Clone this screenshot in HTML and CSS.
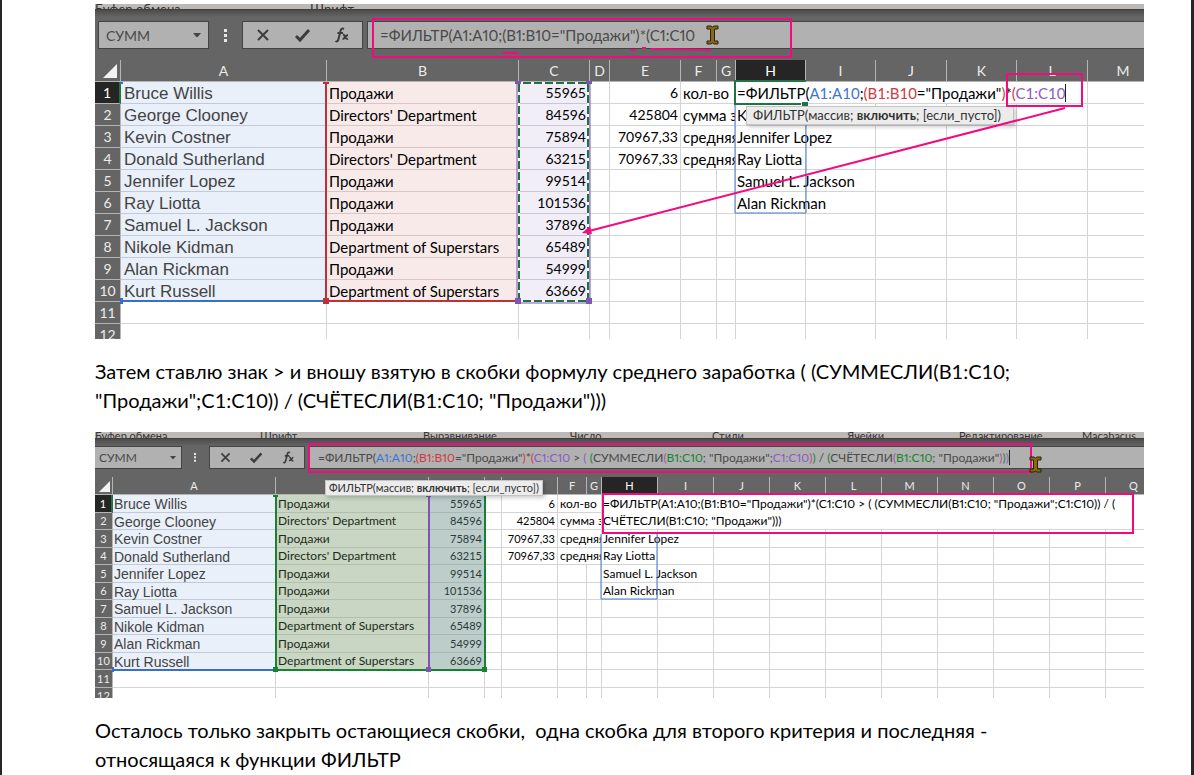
FILE: index.html
```html
<!DOCTYPE html>
<html lang="ru">
<head>
<meta charset="utf-8">
<title>Функция ФИЛЬТР</title>
<link rel="stylesheet" href="styles.css">
</head>
<body>
<main class="page">

<figure class="sheet sheet-large">
  <div class="ribbon"><span>Буфер обмена</span><span>Шрифт</span><span></span><span></span></div>
  <div class="toolbar">
    <div class="namebox">
      <select aria-label="Имя"><option>СУММ</option></select>
      <svg class="caret" viewBox="0 0 10 6" aria-hidden="true"><path d="M0 0h10L5 6z"/></svg>
    </div>
    <svg class="dots" viewBox="0 0 3 13" aria-hidden="true"><path d="M0 0h3v3H0zM0 5h3v3H0zM0 10h3v3H0z"/></svg>
    <div class="actions">
      <button type="button" aria-label="Отмена"><svg viewBox="0 0 16 16"><path class="stroke" d="M3 3L13 13M13 3L3 13"/></svg></button>
      <button type="button" aria-label="Ввод"><svg viewBox="0 0 16 16"><path class="stroke thick" d="M1 9L5 13L14 3"/></svg></button>
      <button type="button" aria-label="Вставить функцию"><svg viewBox="0 0 16 16"><path class="stroke" d="M10 2C8 1 7 2 6.500 4L4.500 12C4 14 3 15 1.500 14M3.500 6H9M9 8C11 7 11 13 14 12M14 8C12 8 11 12 8.500 12"/></svg></button>
    </div>
    <input class="formula" aria-label="Строка формул" value='=ФИЛЬТР(A1:A10;(B1:B10="Продажи")*(C1:C10'>
  </div>
  <table class="grid">
    <colgroup><col class="c-row"><col class="c-a"><col class="c-b"><col class="c-c"><col class="c-d"><col class="c-e"><col class="c-f"><col class="c-g"><col class="c-h"><col class="c-w"><col class="c-x"><col class="c-w"><col class="c-x"><col class="c-x"></colgroup>
    <thead><tr><th class="corner"><svg viewBox="0 0 14 14" aria-hidden="true"><path d="M14 0V14H0z"/></svg></th><th>A</th><th>B</th><th>C</th><th>D</th><th>E</th><th>F</th><th>G</th><th class="on">H</th><th>I</th><th>J</th><th>K</th><th>L</th><th>M</th></tr></thead>
    <tbody>
    <tr><th class="on">1</th><td class="a">Bruce Willis</td><td class="b">Продажи</td><td class="c">55965</td><td></td><td class="n">6</td><td class="t" colspan="2">кол-во</td><td class="edit" colspan="5">=ФИЛЬТР(<span class="blue">A1:A10</span>;<span class="red">(B1:B10</span>="Продажи"<span class="red">)</span>*<span class="red">(</span><span class="violet">C1:C10</span><span class="bar"></span></td><td></td></tr>
    <tr><th>2</th><td class="a">George Clooney</td><td class="b">Directors' Department</td><td class="c">84596</td><td></td><td class="n">425804</td><td class="t" colspan="2">сумма з</td><td class="h">K</td><td></td><td></td><td></td><td></td><td></td></tr>
    <tr><th>3</th><td class="a">Kevin Costner</td><td class="b">Продажи</td><td class="c">75894</td><td></td><td class="n">70967,33</td><td class="t" colspan="2">средняя з</td><td class="h">Jennifer Lopez</td><td></td><td></td><td></td><td></td><td></td></tr>
    <tr><th>4</th><td class="a">Donald Sutherland</td><td class="b">Directors' Department</td><td class="c">63215</td><td></td><td class="n">70967,33</td><td class="t" colspan="2">средняя з</td><td class="h">Ray Liotta</td><td></td><td></td><td></td><td></td><td></td></tr>
    <tr><th>5</th><td class="a">Jennifer Lopez</td><td class="b">Продажи</td><td class="c">99514</td><td></td><td></td><td></td><td></td><td class="h">Samuel L. Jackson</td><td></td><td></td><td></td><td></td><td></td></tr>
    <tr><th>6</th><td class="a">Ray Liotta</td><td class="b">Продажи</td><td class="c">101536</td><td></td><td></td><td></td><td></td><td class="h">Alan Rickman</td><td></td><td></td><td></td><td></td><td></td></tr>
    <tr><th>7</th><td class="a">Samuel L. Jackson</td><td class="b">Продажи</td><td class="c">37896</td><td></td><td></td><td></td><td></td><td></td><td></td><td></td><td></td><td></td><td></td></tr>
    <tr><th>8</th><td class="a">Nikole Kidman</td><td class="b">Department of Superstars</td><td class="c">65489</td><td></td><td></td><td></td><td></td><td></td><td></td><td></td><td></td><td></td><td></td></tr>
    <tr><th>9</th><td class="a">Alan Rickman</td><td class="b">Продажи</td><td class="c">54999</td><td></td><td></td><td></td><td></td><td></td><td></td><td></td><td></td><td></td><td></td></tr>
    <tr><th>10</th><td class="a">Kurt Russell</td><td class="b">Department of Superstars</td><td class="c">63669</td><td></td><td></td><td></td><td></td><td></td><td></td><td></td><td></td><td></td><td></td></tr>
    <tr><th>11</th><td></td><td></td><td></td><td></td><td></td><td></td><td></td><td></td><td></td><td></td><td></td><td></td><td></td></tr>
    <tr><th>12</th><td></td><td></td><td></td><td></td><td></td><td></td><td></td><td></td><td></td><td></td><td></td><td></td><td></td></tr>
    </tbody>
  </table>
  <svg class="marks" width="1049" height="335" aria-hidden="true">
    <path class="m-blue" d="M25 297H230"/><path class="f-blue" d="M25 294h3v6h-3zM25 78h3v2h-3z"/>
    <path class="m-red" d="M231 79V297H423"/><path class="f-red" d="M228 294h6v6h-6zM228 78h6v2h-6z"/>
    <path class="m-white" d="M424 80V297M493 80V297M424 297H494M424 79H493"/>
    <path class="m-violet thin" d="M422 79V297M495 79V297M424 299H495"/>
    <path class="m-ants" d="M424 80V296M493 80V296M428 297H491M428 79H491"/>
    <path class="f-violet" d="M420 294h6v6h-6zM491 294h6v6h-6zM420 77h6v3h-6zM491 77h6v3h-6z"/>
    <path class="m-spill" d="M640 100V209H711V100"/>
    <path class="m-active" d="M711 77H640V100H706M708 99h4v2h-4z"/>
  </svg>
  <div class="tip">ФИЛЬТР(массив; <b>включить</b>; [если_пусто])</div>
  <svg class="marks" width="1049" height="335" aria-hidden="true">
    <rect class="pink" x="278" y="15" width="418" height="38"/>
    <rect class="pink" x="912" y="70" width="75" height="32"/>
    <path class="pink" d="M970 104L494 227M408 49h16M535 46h6M547 44h4M556 45L616 46"/>
    <path class="f-pink" d="M487 229L495 222L497 230z"/>
    <path class="beam" d="M612 22h4l1.500 1l1.500 -1h4v3h-3.500v12h3.500v3h-4l-1.500 -1l-1.500 1h-4v-3h3.500v-12h-3.500z"/>
  </svg>
</figure>

<p>Затем ставлю знак &gt; и вношу взятую в скобки формулу среднего заработка ( (СУММЕСЛИ(B1:C10; "Продажи";C1:C10)) / (СЧЁТЕСЛИ(B1:C10; "Продажи")))</p>

<figure class="sheet sheet-small">
  <div class="ribbon"><span>Буфер обмена</span><span>Шрифт</span><span>Выравнивание</span><span>Число</span><span>Стили</span><span>Ячейки</span><span>Редактирование</span><span>Macabacus</span></div>
  <div class="toolbar">
    <div class="namebox">
      <select aria-label="Имя"><option>СУММ</option></select>
      <svg class="caret" viewBox="0 0 10 6" aria-hidden="true"><path d="M0 0h10L5 6z"/></svg>
    </div>
    <svg class="dots" viewBox="0 0 3 13" aria-hidden="true"><path d="M0 0h3v3H0zM0 5h3v3H0zM0 10h3v3H0z"/></svg>
    <div class="actions">
      <button type="button" aria-label="Отмена"><svg viewBox="0 0 16 16"><path class="stroke" d="M3 3L13 13M13 3L3 13"/></svg></button>
      <button type="button" aria-label="Ввод"><svg viewBox="0 0 16 16"><path class="stroke thick" d="M1 9L5 13L14 3"/></svg></button>
      <button type="button" aria-label="Вставить функцию"><svg viewBox="0 0 16 16"><path class="stroke" d="M10 2C8 1 7 2 6.500 4L4.500 12C4 14 3 15 1.500 14M3.500 6H9M9 8C11 7 11 13 14 12M14 8C12 8 11 12 8.500 12"/></svg></button>
    </div>
    <div class="formula" role="textbox" contenteditable="true" aria-label="Строка формул">=ФИЛЬТР(<span class="blue">A1:A10</span>;<span class="red">(B1:B10</span>="Продажи"<span class="red">)</span>*<span class="red">(</span><span class="violet">C1:C10</span> &gt; <span class="violet">(</span> <span class="green">(</span>СУММЕСЛИ<span class="plum">(</span><span class="green">B1:C10</span>; "Продажи";<span class="violet">C1:C10</span><span class="plum">)</span><span class="green">)</span> / <span class="green">(</span>СЧЁТЕСЛИ<span class="plum">(</span><span class="green">B1:C10</span>; "Продажи"<span class="plum">)</span><span class="green">)</span><span class="violet">)</span><span class="bar"></span></div>
  </div>
  <table class="grid">
    <colgroup><col class="c-row"><col class="c-a"><col class="c-b"><col class="c-c"><col class="c-d"><col class="c-e"><col class="c-f"><col class="c-g"><col class="c-h"><col class="c-x"><col class="c-x"><col class="c-x"><col class="c-x"><col class="c-x"><col class="c-x"><col class="c-x"><col class="c-x"><col class="c-x"></colgroup>
    <thead><tr><th class="corner"><svg viewBox="0 0 14 14" aria-hidden="true"><path d="M14 0V14H0z"/></svg></th><th>A</th><th>B</th><th>C</th><th>D</th><th>E</th><th>F</th><th>G</th><th class="on">H</th><th>I</th><th>J</th><th>K</th><th>L</th><th>M</th><th>N</th><th>O</th><th>P</th><th>Q</th></tr></thead>
    <tbody>
    <tr><th class="on">1</th><td class="a">Bruce Willis</td><td class="b">Продажи</td><td class="c">55965</td><td></td><td class="n">6</td><td class="t" colspan="2">кол-во</td><td class="edit" colspan="10" rowspan="2">=ФИЛЬТР(A1:A10;(B1:B10="Продажи")*(C1:C10 &gt; ( (СУММЕСЛИ(B1:C10; "Продажи";C1:C10)) / (<br>СЧЁТЕСЛИ(B1:C10; "Продажи")))</td></tr>
    <tr><th>2</th><td class="a">George Clooney</td><td class="b">Directors' Department</td><td class="c">84596</td><td></td><td class="n">425804</td><td class="t" colspan="2">сумма з</td></tr>
    <tr><th>3</th><td class="a">Kevin Costner</td><td class="b">Продажи</td><td class="c">75894</td><td></td><td class="n">70967,33</td><td class="t" colspan="2">средняя з</td><td class="h">Jennifer Lopez</td><td></td><td></td><td></td><td></td><td></td><td></td><td></td><td></td><td></td></tr>
    <tr><th>4</th><td class="a">Donald Sutherland</td><td class="b">Directors' Department</td><td class="c">63215</td><td></td><td class="n">70967,33</td><td class="t" colspan="2">средняя з</td><td class="h">Ray Liotta</td><td></td><td></td><td></td><td></td><td></td><td></td><td></td><td></td><td></td></tr>
    <tr><th>5</th><td class="a">Jennifer Lopez</td><td class="b">Продажи</td><td class="c">99514</td><td></td><td></td><td></td><td></td><td class="h">Samuel L. Jackson</td><td></td><td></td><td></td><td></td><td></td><td></td><td></td><td></td><td></td></tr>
    <tr><th>6</th><td class="a">Ray Liotta</td><td class="b">Продажи</td><td class="c">101536</td><td></td><td></td><td></td><td></td><td class="h">Alan Rickman</td><td></td><td></td><td></td><td></td><td></td><td></td><td></td><td></td><td></td></tr>
    <tr><th>7</th><td class="a">Samuel L. Jackson</td><td class="b">Продажи</td><td class="c">37896</td><td></td><td></td><td></td><td></td><td></td><td></td><td></td><td></td><td></td><td></td><td></td><td></td><td></td><td></td></tr>
    <tr><th>8</th><td class="a">Nikole Kidman</td><td class="b">Department of Superstars</td><td class="c">65489</td><td></td><td></td><td></td><td></td><td></td><td></td><td></td><td></td><td></td><td></td><td></td><td></td><td></td><td></td></tr>
    <tr><th>9</th><td class="a">Alan Rickman</td><td class="b">Продажи</td><td class="c">54999</td><td></td><td></td><td></td><td></td><td></td><td></td><td></td><td></td><td></td><td></td><td></td><td></td><td></td><td></td></tr>
    <tr><th>10</th><td class="a">Kurt Russell</td><td class="b">Department of Superstars</td><td class="c">63669</td><td></td><td></td><td></td><td></td><td></td><td></td><td></td><td></td><td></td><td></td><td></td><td></td><td></td><td></td></tr>
    <tr><th>11</th><td></td><td></td><td></td><td></td><td></td><td></td><td></td><td></td><td></td><td></td><td></td><td></td><td></td><td></td><td></td><td></td><td></td></tr>
    <tr><th>12</th><td></td><td></td><td></td><td></td><td></td><td></td><td></td><td></td><td></td><td></td><td></td><td></td><td></td><td></td><td></td><td></td><td></td></tr>
    </tbody>
  </table>
  <svg class="marks" width="1049" height="266" aria-hidden="true">
    <path class="m-blue" d="M17 238H180"/><path class="f-blue" d="M17 235h2v5h-2z"/>
    <path class="m-green" d="M181 64V238H390V64"/>
    <path class="m-violet" d="M334 64V236"/>
    <path class="f-green" d="M178 235h5v5h-5zM387 235h5v5h-5zM178 63h5v2h-5z"/><path class="f-violet" d="M331 235h5v5h-5zM331 63h5v2h-5z"/>
    <path class="m-spill" d="M506 102V167H562V102"/>
  </svg>
  <div class="tip">ФИЛЬТР(массив; <b>включить</b>; [если_пусто])</div>
  <svg class="marks" width="1049" height="266" aria-hidden="true">
    <rect class="pink" x="214" y="12" width="722" height="28"/>
    <rect class="pink" x="508" y="62" width="530" height="39"/>
    <path class="beam" d="M935 25h4l1.500 1l1.500 -1h4v3h-3.500v9h3.500v3h-4l-1.500 -1l-1.500 1h-4v-3h3.500v-9h-3.500z"/>
  </svg>
</figure>

<p>Осталось только закрыть остающиеся скобки,&nbsp; одна скобка для второго критерия и последняя - относящаяся к функции ФИЛЬТР</p>
</main>
</body>
</html>
```

FILE: styles.css
```css
* { box-sizing: border-box; }

body {
  margin: 0;
  background: #fff;
  color: #000;
  font-family: Lato, "Open Sans", sans-serif;
  overflow: hidden;
}

.page {
  min-height: 100vh;
  padding: 4px 47px 0 93px;
  border-left: 2px solid #26262a;
  border-right: 3px solid #26262a;
}

.page p {
  margin: 18px 0 17px;
  padding-right: 48px;
  font-size: 20px;
  line-height: 29px;
}

.sheet {
  position: relative;
  margin: 0;
  overflow: hidden;
  background: #fff;
}

.sheet-large { height: 335px; font-size: 15px; }
.sheet-small { height: 266px; font-size: 12px; }

/* Ribbon edge */
.ribbon {
  display: grid;
  align-items: end;
  overflow: hidden;
  background: #bdb9b6;
  border-bottom: 1px solid #3f3f3f;
  color: #333;
  white-space: nowrap;
}
.ribbon span { height: 16px; }
.sheet-large .ribbon { height: 6px; line-height: 10px; font-size: 13px; grid-template-columns: 215px 200px 1fr 1fr; }
.sheet-small .ribbon { height: 7px; line-height: 8px; font-size: 11px; grid-template-columns: 165px 163px 147px 142px 135px 112px 123px 1fr; }

/* Name box, buttons and formula bar */
.toolbar {
  display: flex;
  background: linear-gradient(#4c4c4c, #656565 7px);
}
.sheet-large .toolbar { padding: 11px 0 11px 3px; }
.sheet-small .toolbar { padding: 7px 0 8px; }

.namebox, .actions, .formula {
  background: #b1b1b1;
  border: 1px solid #444;
}
.sheet-large .namebox, .sheet-large .actions, .sheet-large .formula { height: 28px; }
.sheet-small .namebox, .sheet-small .actions, .sheet-small .formula { height: 23px; }

.namebox { display: flex; align-items: center; }
.sheet-large .namebox { width: 111px; padding: 0 7px; }
.sheet-small .namebox { width: 87px; padding: 0 5px 0 4px; border-left: 0; }
.namebox select {
  flex: 1;
  min-width: 0;
  padding: 0;
  border: 0;
  background: none;
  appearance: none;
  color: #4a4a4a;
  font: inherit;
}
.sheet-large .namebox select { font-size: 14px; }
.caret { width: 8px; fill: #444; }
.sheet-small .caret { width: 6px; }

.dots { align-self: center; fill: #e6e6e6; }
.sheet-large .dots { width: 3px; margin: 0 15px; }
.sheet-small .dots { width: 2px; margin: 0 13px 0 12px; }

.actions { display: flex; }
.sheet-large .actions { width: 121px; margin-right: 4px; }
.sheet-small .actions { width: 96px; margin-right: 4px; }
.actions button {
  flex: 1;
  display: flex;
  align-items: center;
  justify-content: center;
  padding: 0;
  border: 0;
  background: none;
}
.actions svg { width: 16px; height: 16px; }
.sheet-small .actions svg { width: 13px; height: 13px; }
.stroke { fill: none; stroke: #3c3c3c; stroke-width: 2; }
.thick { stroke-width: 3; }

.formula {
  flex: 1;
  min-width: 0;
  border-right: 0;
  color: #4a4a4a;
  font: inherit;
  white-space: nowrap;
  outline: 0;
}
.sheet-large .formula { padding: 0 12px; }
.sheet-small .formula { padding: 0 8px; line-height: 21px; }
.formula, .sheet-small .edit { font-variant-numeric: proportional-nums; }

.blue { color: #3d75d0; }
.red { color: #d03a40; }
.violet { color: #8a5cc4; }
.green { color: #16862c; }
.plum { color: #b34f9c; }
.bar { border-right: 1px solid #222; }

/* Cells */
.grid {
  table-layout: fixed;
  width: 1px;
  border-spacing: 0;
  line-height: 16px;
}
.grid th, .grid td {
  padding: 0;
  border-right: 1px solid #d4d4d4;
  border-bottom: 1px solid #d4d4d4;
  white-space: nowrap;
}
.grid th { background: #656565; color: #ececec; font-weight: 400; text-align: center; border-color: #b5b5b5; }
.sheet-large th { font-size: 14px; }
.sheet-small th { font-size: 11px; }
.grid .on { background: #252525; color: #fff; }
.grid tbody .on { border-right: 2px solid #217346; }
.grid .corner { text-align: right; vertical-align: bottom; line-height: 0; }
.corner svg { width: 14px; margin: 0 3px 3px 0; fill: #f2f2f2; }
.sheet-small .corner svg { width: 11px; margin: 0 2px 2px 0; }

.sheet-large tr { height: 22px; }
.sheet-small tr { height: 18px; }
.sheet-small tbody tr:nth-child(even) { height: 17px; }
.sheet-small .grid { line-height: 14px; }

.grid .a { background: #e9f0fa; border-color: #c3c9d6; color: #434343; font-family: "Liberation Sans", Arial, sans-serif; }
.sheet-large .a { padding: 2px 0 0 3px; font-size: 17px; }
.sheet-small .a { padding: 1px 0 0 1px; font-size: 14px; }
.grid .b { padding-left: 2px; background: #f9eaea; border-color: #d6c6c8; }
.grid .c { padding-right: 3px; background: #f1eef8; border-color: #c8c5d2; text-align: right; }
.sheet-small .b { background: #c9d6c3; border-color: #b3bfae; color: #1b2b18; }
.sheet-small .c { padding-right: 2px; background: #bccdca; border-color: #a7b7b5; color: #2b3b3b; }
.grid .n { padding-right: 2px; text-align: right; }
.sheet-large .c, .sheet-large .n { font-size: 14px; }
.sheet-small .c, .sheet-small .n { font-size: 11px; }
.grid .t { padding-left: 2px; overflow: hidden; }
.grid .h, .grid .edit { padding-left: 1px; }
.sheet-small .edit { line-height: 17px; }

.sheet-large .c-row { width: 26px; }
.sheet-large .c-a { width: 206px; }
.sheet-large .c-b { width: 192px; }
.sheet-large .c-c { width: 71px; }
.sheet-large .c-d { width: 20px; }
.sheet-large .c-e { width: 71px; }
.sheet-large .c-f { width: 36px; }
.sheet-large .c-g { width: 19px; }
.sheet-large .c-h { width: 70px; }
.sheet-large .c-w { width: 70px; }
.sheet-large .c-x { width: 71px; }

.sheet-small .c-row { width: 18px; }
.sheet-small .c-a { width: 163px; }
.sheet-small .c-b { width: 153px; }
.sheet-small .c-c { width: 56px; }
.sheet-small .c-d { width: 17px; }
.sheet-small .c-e { width: 56px; }
.sheet-small .c-f { width: 29px; }
.sheet-small .c-g { width: 15px; }
.sheet-small .c-h { width: 56px; }
.sheet-small .c-x { width: 56px; }

/* Function hint */
.tip {
  position: absolute;
  background: #ececec;
  border: 1px solid #c4c4c4;
  box-shadow: 2px 2px 4px rgba(0, 0, 0, .2);
  color: #333;
  white-space: nowrap;
}
.sheet-large .tip { left: 651px; top: 102px; padding: 0 12px 0 6px; font-size: 13px; line-height: 17px; }
.sheet-small .tip { left: 230px; top: 48px; padding: 0 3px; font-size: 11px; line-height: 14px; }

/* Range outlines and annotations */
.marks { position: absolute; left: 0; top: 0; fill: none; stroke-width: 2; pointer-events: none; }
.m-blue { stroke: #3a6fc8; }
.m-red { stroke: #bf3039; }
.m-green { stroke: #168232; }
.m-violet { stroke: #7e55b5; }
.thin { stroke-width: 1; }
.m-white { stroke: #fff; stroke-width: 2; }
.m-ants { stroke: #1f7044; stroke-width: 2; stroke-dasharray: 8 3; }
.m-spill { stroke: #4a7cc9; stroke-width: 1; }
.m-active { stroke: #217346; }
.f-blue { fill: #3a6fc8; }
.f-red { fill: #bf3039; }
.f-green { fill: #168232; }
.f-violet { fill: #7e55b5; }
.pink { stroke: #f5097f; }
.f-pink { fill: #f5097f; }
.beam { fill: #8a6a10; stroke: #2a2208; stroke-width: 1; }
```
